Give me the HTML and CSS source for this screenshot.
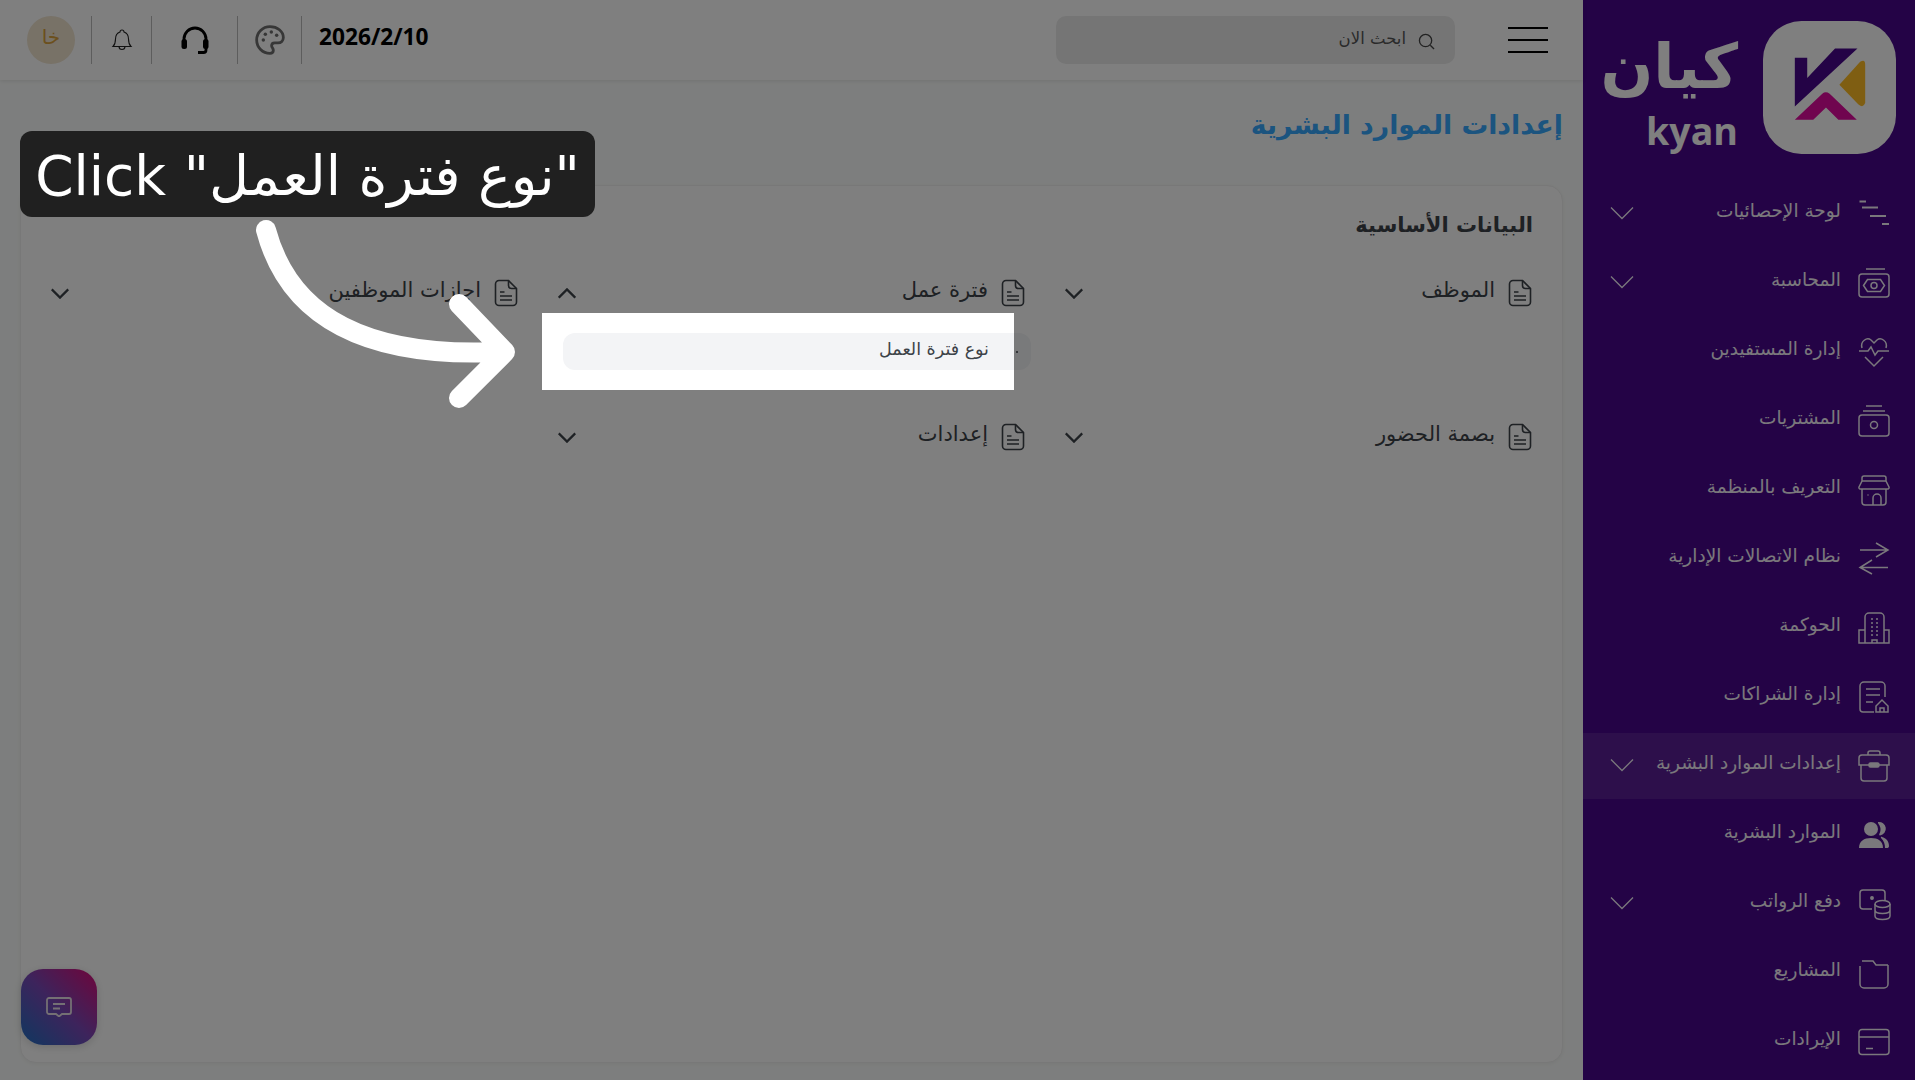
FILE: index.html
```html
<!DOCTYPE html>
<html lang="ar" dir="rtl">
<head>
    <meta charset="UTF-8">
    <title>إعدادات الموارد البشرية</title>
    <link rel="stylesheet" href="styles.css">
</head>
<body>

<svg width="0" height="0" class="defs">
    <symbol id="doc" viewBox="0 0 24 28">
        <path d="M5 1.5h9.500l8 8V23a3.500 3.500 0 0 1-3.500 3.500H5A3.500 3.500 0 0 1 1.500 23V5A3.500 3.500 0 0 1 5 1.500z"/>
        <path d="M14.500 1.500v5a3 3 0 0 0 3 3h5M6 13h4.500M6 17h12M6 21h12"/>
    </symbol>
    <symbol id="chev" viewBox="0 0 24 14">
        <path d="M1 1.500l11 11 11-11"/>
    </symbol>
</svg>

<div class="app">
    <aside class="sidebar">
        <div class="brand">
            <svg class="brand-mark" viewBox="550 65 397 397">
                <rect x="550" y="65" width="397" height="397" rx="115" fill="#fff"/>
                <path d="M645 175h37v60l83-88h67L645 320z" fill="#48068c"/>
                <path d="M778 255l62-68q15-10 15 8v115q-6 16-20 4z" fill="#ffbc24"/>
                <path d="M645 360l82-78q10-8 22 0l81 78h-55l-37-37-38 37z" fill="#e00a9e"/>
            </svg>
            <div class="brand-name">
                <span class="brand-ar">كيان</span>
                <span class="brand-en" dir="ltr">kyan</span>
            </div>
        </div>

        <nav class="nav">
            <a class="nav-row">
                <svg class="nav-icon" viewBox="0 0 32 32"><path stroke-width="2" d="M1.500 3.500H8M4 9.500h16M12 18h16M24 26h7"/></svg>
                <span>لوحة الإحصائيات</span>
                <svg class="nav-chev"><use href="#chev"/></svg>
            </a>
            <a class="nav-row">
                <svg class="nav-icon" viewBox="0 0 32 32"><path d="M8 2h19"/><rect x="1" y="7" width="30" height="23" rx="3"/><path d="M5.500 18.500l4-6h13l4 6-4 6h-13z"/><circle cx="16" cy="18.500" r="3"/></svg>
                <span>المحاسبة</span>
                <svg class="nav-chev"><use href="#chev"/></svg>
            </a>
            <a class="nav-row">
                <svg class="nav-icon" viewBox="0 0 32 32"><path d="M4 12C2 5 9 1 13 4l3 3 3-3c4-3 11 1 9 8M1 15h9l3-4 4 8 3-4h11M7 21l9 9 9-9"/></svg>
                <span>إدارة المستفيدين</span>
            </a>
            <a class="nav-row">
                <svg class="nav-icon" viewBox="0 0 32 32"><path d="M8 1h16M5 6h22"/><rect x="1" y="10" width="30" height="21" rx="3"/><circle cx="16" cy="20" r="3.500"/></svg>
                <span>المشتريات</span>
            </a>
            <a class="nav-row">
                <svg class="nav-icon" viewBox="0 0 32 32"><path d="M6 2h20a2 2 0 0 1 2 2v3l3 6a1.500 1.500 0 0 1-1 2H2a1.500 1.500 0 0 1-1-2l3-6V4a2 2 0 0 1 2-2zM4 7h24M4 15v13a3 3 0 0 0 3 3h18a3 3 0 0 0 3-3V15M15 31v-7a4 4 0 0 1 8 0v7M9.500 21h1"/></svg>
                <span>التعريف بالمنظمة</span>
            </a>
            <a class="nav-row">
                <svg class="nav-icon" viewBox="0 0 32 32"><path d="M2 7h28M18 0l12 7-12 7M30 24.500H2M14 17L2 24.500 14 31"/></svg>
                <span>نظام الاتصالات الإدارية</span>
            </a>
            <a class="nav-row">
                <svg class="nav-icon" viewBox="0 0 32 32"><path d="M7 31V5a4 4 0 0 1 4-4h11a4 4 0 0 1 4 4v26M7 18H1v13h30V18h-5M14 31v-3h5v3M13 7h2M18 7h2M13 11h2M18 11h2M13 15h2M18 15h2M13 19h2M18 19h2M13 23h2M18 23h2"/></svg>
                <span>الحوكمة</span>
            </a>
            <a class="nav-row">
                <svg class="nav-icon" viewBox="0 0 32 32"><path d="M27 16V5a4 4 0 0 0-4-4H6a4 4 0 0 0-4 4v23a3 3 0 0 0 3 3h11M8 8h14M8 14h14M8 21h7M18 31v-6l6-6 6 6v6zM22 31v-4h4v4"/></svg>
                <span>إدارة الشراكات</span>
            </a>
            <a class="nav-row active">
                <svg class="nav-icon" viewBox="0 0 32 32"><path d="M10 5V3a2 2 0 0 1 2-2h8a2 2 0 0 1 2 2v2M11 15H1V8a3 3 0 0 1 3-3h24a3 3 0 0 1 3 3v7H21M3 15v13a3 3 0 0 0 3 3h20a3 3 0 0 0 3-3V15"/><rect x="11" y="13" width="10" height="4" rx="1.500" fill="currentColor"/></svg>
                <span>إعدادات الموارد البشرية</span>
                <svg class="nav-chev"><use href="#chev"/></svg>
            </a>
            <a class="nav-row">
                <svg class="nav-icon" viewBox="0 0 32 32"><g fill="currentColor" stroke="none"><circle cx="13" cy="10" r="7"/><path d="M1 29c0-7 5-10 12-10s12 3 12 10z"/><path d="M20 3a6.500 6.500 0 0 1 2 13.500c-1 0-1-1-.500-2a9 9 0 0 0 0-8c-.500-1-2-2.500-1.500-3.500zM24 18c4 1 7 4 7 9 0 1.500-1 2-2 2h-2c0-4-1-7-4-10-.500-1 .500-1.500 1-1z"/></g></svg>
                <span>الموارد البشرية</span>
            </a>
            <a class="nav-row">
                <svg class="nav-icon" viewBox="0 0 32 32"><path d="M14 21H5a3 3 0 0 1-3-3V5a3 3 0 0 1 3-3h19a3 3 0 0 1 3 3v7"/><circle cx="14" cy="10" r="1.200" fill="currentColor"/><ellipse cx="24.500" cy="16" rx="7.500" ry="3.500"/><path d="M17 16v12c0 2 3 3.500 7.500 3.500S32 30 32 28V16M17 22c0 2 3 3.500 7.500 3.500S32 24 32 22"/></svg>
                <span>دفع الرواتب</span>
                <svg class="nav-chev"><use href="#chev"/></svg>
            </a>
            <a class="nav-row">
                <svg class="nav-icon" viewBox="0 0 32 32"><path d="M4 4h11l3 4h12M2 9v18a4 4 0 0 0 4 4h20a4 4 0 0 0 4-4V8"/></svg>
                <span>المشاريع</span>
            </a>
            <a class="nav-row">
                <svg class="nav-icon" viewBox="0 0 32 32"><rect x="1" y="3.500" width="30" height="25" rx="3"/><path d="M1 11h30M8 22.500h7"/></svg>
                <span>الإيرادات</span>
            </a>
        </nav>
    </aside>

    <div class="main">
        <header class="topbar">
            <div class="burger"><i></i><i></i><i></i></div>
            <div class="search">
                <svg class="search-icon" viewBox="0 0 18 18"><circle cx="8" cy="8" r="6.500"/><path d="M13 13l4 4"/></svg>
                <span>ابحث الان</span>
            </div>
            <div class="tools" dir="ltr">
                <div class="avatar">خا</div>
                <div class="tool">
                    <svg class="bell" viewBox="0 0 24 24"><path d="M12 2a2 2 0 0 1 2 2c3 1 4.500 3.500 4.500 7 0 4 .500 5.500 2.500 7.500H3c2-2 2.500-3.500 2.500-7.500 0-3.500 1.500-6 4.500-7a2 2 0 0 1 2-2zM9 18.500c0 4 6 4 6 0"/></svg>
                </div>
                <div class="tool wide">
                    <svg class="headset" viewBox="0 0 28 28"><path d="M3 16v-3a11 11 0 0 1 22 0v3M25 22v2a2.500 2.500 0 0 1-2.500 2.500H17"/><rect x="0.500" y="13" width="5.500" height="10" rx="2.500" fill="#000" stroke="none"/><rect x="22" y="13" width="5.500" height="10" rx="2.500" fill="#000" stroke="none"/></svg>
                </div>
                <div class="tool mid">
                    <svg class="palette" viewBox="0 0 24 24"><path d="M12 2a10 10 0 0 0 0 20c1.500 0 2.500-1 2.500-2.300 0-.700-.300-1.200-.600-1.700-.400-.500-.700-1-.700-1.600 0-1.300 1-2.200 2.300-2.200H18c2.300 0 4-1.700 4-4C22 5.500 17.500 2 12 2z"/><g fill="#6e6e6e" stroke="none"><circle cx="7" cy="12" r="1.300"/><circle cx="8.500" cy="7.700" r="1.300"/><circle cx="13" cy="6" r="1.300"/><circle cx="17" cy="8.500" r="1.300"/></g></svg>
                </div>
                <div class="date">2026/2/10</div>
            </div>
        </header>

        <h1 class="page-title">إعدادات الموارد البشرية</h1>

        <section class="card">
            <h2 class="card-title">البيانات الأساسية</h2>
            <div class="groups">
                <div class="group">
                    <div class="group-head">
                        <svg class="doc"><use href="#doc"/></svg>
                        <span>الموظف</span>
                        <svg class="chev"><use href="#chev"/></svg>
                    </div>
                </div>
                <div class="group">
                    <div class="group-head">
                        <svg class="doc"><use href="#doc"/></svg>
                        <span>فترة عمل</span>
                        <svg class="chev up"><use href="#chev"/></svg>
                    </div>
                    <div class="sub-item"><i></i><span>نوع فترة العمل</span></div>
                </div>
                <div class="group">
                    <div class="group-head">
                        <svg class="doc"><use href="#doc"/></svg>
                        <span>اجازات الموظفين</span>
                        <svg class="chev"><use href="#chev"/></svg>
                    </div>
                </div>
                <div class="group">
                    <div class="group-head">
                        <svg class="doc"><use href="#doc"/></svg>
                        <span>بصمة الحضور</span>
                        <svg class="chev"><use href="#chev"/></svg>
                    </div>
                </div>
                <div class="group">
                    <div class="group-head">
                        <svg class="doc"><use href="#doc"/></svg>
                        <span>إعدادات</span>
                        <svg class="chev"><use href="#chev"/></svg>
                    </div>
                </div>
            </div>
        </section>
    </div>
</div>

<button class="chat-btn">
    <svg viewBox="0 0 26 20"><path d="M3 1h20a2 2 0 0 1 2 2v12a2 2 0 0 1-2 2h-7l-3 2.500L10 17H3a2 2 0 0 1-2-2V3a2 2 0 0 1 2-2zM7 7h12M7 11.500h7"/></svg>
</button>

<!-- guide layer: dimmed page with the spotlight hole -->
<div class="spotlight"></div>
<div class="tip" dir="ltr">Click "نوع فترة العمل"</div>
<svg class="arrow" viewBox="0 0 1915 1080">
    <path d="M266 230C290 320 370 358 499 352M459 304L505 352 459 398"/>
</svg>

</body>
</html>
```

FILE: styles.css
```css
* {
    box-sizing: border-box;
}

html, body {
    margin: 0;
    height: 1080px;
    overflow: hidden;
}

body {
    position: relative;
    font-family: "DejaVu Sans", sans-serif;
    color: #3c4248;
    background: #fbfdfc;
}

.defs {
    position: absolute;
}

symbol path {
    fill: none;
}

.app {
    display: flex;
    height: 1080px;
}

/* sidebar */
.sidebar {
    width: 332px;
    flex-shrink: 0;
    background: #48068c;
    color: #f4f0f8;
}

.brand {
    display: flex;
    align-items: flex-start;
    gap: 25px;
    padding: 21px 19px 0 0;
    height: 181px;
}

.brand-mark {
    width: 133px;
    height: 133px;
    flex-shrink: 0;
}

.brand-name {
    display: flex;
    flex-direction: column;
    align-items: flex-start;
    color: #fff;
}

.brand-ar {
    font-size: 62px;
    font-weight: bold;
    line-height: 92px;
}

.brand-en {
    font-family: "Open Sans", sans-serif;
    font-size: 37.500px;
    font-weight: 700;
    line-height: 36px;
}

.nav-row {
    display: flex;
    align-items: center;
    gap: 17px;
    height: 66px;
    margin-bottom: 3px;
    padding: 0 25px 0 27px;
    font-size: 18.500px;
}

.nav-row span {
    margin-top: -7px;
}

.nav-row.active {
    background: rgba(255, 255, 255, .1);
}

.nav-icon {
    width: 32px;
    height: 32px;
    flex-shrink: 0;
    margin-top: -1px;
    fill: none;
    stroke: currentColor;
    stroke-width: 1.500;
    overflow: visible;
}

.nav-chev {
    width: 24px;
    height: 14px;
    margin-top: -2px;
    margin-right: auto;
    fill: none;
    stroke: currentColor;
    stroke-width: 1.300;
}

/* main */
.main {
    flex: 1;
    min-width: 0;
}

.topbar {
    display: flex;
    align-items: center;
    height: 80px;
    padding-right: 35px;
    background: #fff;
    box-shadow: 0 1px 4px rgba(0, 0, 0, .1);
}

.burger {
    display: flex;
    flex-direction: column;
    gap: 10.500px;
    width: 40px;
}

.burger i {
    display: block;
    height: 1.500px;
    background: #000;
}

.search {
    display: flex;
    align-items: center;
    gap: 12px;
    width: 399px;
    height: 48px;
    margin-right: 53px;
    padding-right: 20px;
    border-radius: 10px;
    background: #ebebeb;
    color: #555;
    font-size: 16.500px;
}

.search span {
    margin-top: -4px;
}

.search-icon {
    width: 17px;
    height: 17px;
    margin-top: 3px;
    fill: none;
    stroke: #444;
    stroke-width: 1.400;
}

.tools {
    display: flex;
    align-items: center;
    flex: 1;
    padding-left: 27px;
    height: 48px;
}

.avatar {
    display: flex;
    align-items: center;
    justify-content: center;
    width: 48px;
    height: 48px;
    margin-right: 16px;
    padding-bottom: 7px;
    border-radius: 50%;
    background: #f0e4cf;
    color: #d8a03a;
    font-size: 20px;
}

.tool {
    display: flex;
    align-items: center;
    justify-content: center;
    width: 60px;
    height: 48px;
    border-left: 1.500px solid #bbb;
}

.tool.wide {
    width: 86px;
}

.tool.mid {
    width: 65px;
    border-right: 1.500px solid #bbb;
}

.bell {
    width: 24px;
    height: 24px;
    fill: none;
    stroke: #222;
    stroke-width: 1.100;
}

.headset {
    width: 28px;
    height: 28px;
    margin-top: -1px;
    fill: none;
    stroke: #000;
    stroke-width: 2.800;
}

.palette {
    width: 32px;
    height: 32px;
    fill: none;
    stroke: #6e6e6e;
    stroke-width: 2.100;
}

.date {
    margin-left: 17px;
    margin-top: -8px;
    font-family: "Open Sans", sans-serif;
    font-size: 22.700px;
    font-weight: 700;
    color: #000;
}

.page-title {
    height: 40px;
    margin: 25px 20px 40px 0;
    font-size: 26.700px;
    line-height: 40px;
    font-weight: bold;
    color: #36a8ff;
}

.card {
    height: 878px;
    margin: 0 20px;
    padding: 23px 29px 0 28px;
    border: 1px solid #f0f0f0;
    border-radius: 16px;
    background: #fff;
    box-shadow: 0 1px 4px rgba(0, 0, 0, .05);
}

.card-title {
    height: 32px;
    margin: 0 0 38px;
    font-size: 21px;
    line-height: 32px;
    font-weight: bold;
}

.groups {
    display: grid;
    grid-template-columns: repeat(3, 471px);
    grid-auto-rows: 144px;
    gap: 0 36px;
}

.group-head {
    display: flex;
    align-items: center;
    gap: 13px;
    height: 28px;
    padding: 0 1px 0 3px;
    font-size: 21px;
}

.group-head span {
    margin-top: -7px;
}

.doc {
    width: 24px;
    height: 28px;
    fill: none;
    stroke: #3c4248;
    stroke-width: 1.600;
}

.chev {
    width: 18px;
    height: 11px;
    margin-right: auto;
    fill: none;
    stroke: #3c4248;
    stroke-width: 3;
}

.chev.up {
    transform: rotate(180deg);
}

.sub-item {
    display: flex;
    align-items: center;
    height: 37px;
    margin: 26px -5px 0 8px;
    padding-right: 13px;
    border-radius: 12px;
    background: #f3f4f6;
    font-size: 17.500px;
}

.sub-item i {
    width: 2px;
    height: 2px;
    margin-left: 27px;
    border-radius: 50%;
    background: #3c4248;
}

.sub-item span {
    margin-top: -6px;
}

/* floating chat button */
.chat-btn {
    position: absolute;
    left: 21px;
    top: 969px;
    display: flex;
    align-items: center;
    justify-content: center;
    width: 76px;
    height: 76px;
    padding: 0;
    border: 0;
    border-radius: 22px;
    background: linear-gradient(45deg, #1f70c0, #7a48b8 50%, #dc0c78);
    box-shadow: 0 2px 8px rgba(0, 0, 0, .15);
}

.chat-btn svg {
    width: 26px;
    height: 20px;
    fill: none;
    stroke: #e8e0e8;
    stroke-width: 1.800;
}

/* guide layer */
.spotlight {
    position: absolute;
    left: 542px;
    top: 313px;
    width: 472px;
    height: 77px;
    box-shadow: 0 0 0 2400px rgba(0, 0, 0, .5);
}

.tip {
    position: absolute;
    left: 20px;
    top: 131px;
    display: flex;
    align-items: center;
    justify-content: center;
    width: 575px;
    height: 86px;
    padding-top: 4px;
    border-radius: 12px;
    background: #202020;
    color: #fff;
    font-size: 55px;
    white-space: nowrap;
}

.arrow {
    position: absolute;
    left: 0;
    top: 0;
    width: 1915px;
    height: 1080px;
    fill: none;
    stroke: #fff;
    stroke-width: 20;
    stroke-linecap: round;
    stroke-linejoin: round;
}
```
